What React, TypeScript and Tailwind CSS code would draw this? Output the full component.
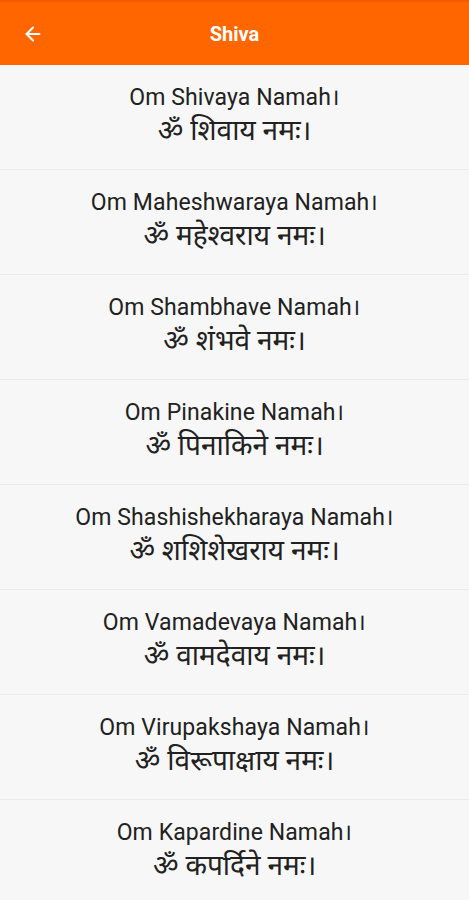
import React from 'react';
import { ArrowLeft } from 'lucide-react';

const mantras = [
  { en: 'Om Shivaya Namah।', hi: 'ॐ शिवाय नमः।' },
  { en: 'Om Maheshwaraya Namah।', hi: 'ॐ महेश्वराय नमः।' },
  { en: 'Om Shambhave Namah।', hi: 'ॐ शंभवे नमः।' },
  { en: 'Om Pinakine Namah।', hi: 'ॐ पिनाकिने नमः।' },
  { en: 'Om Shashishekharaya Namah।', hi: 'ॐ शशिशेखराय नमः।' },
  { en: 'Om Vamadevaya Namah।', hi: 'ॐ वामदेवाय नमः।' },
  { en: 'Om Virupakshaya Namah।', hi: 'ॐ विरूपाक्षाय नमः।' },
  { en: 'Om Kapardine Namah।', hi: 'ॐ कपर्दिने नमः।' },
];

const App: React.FC = () => {
  return (
    <div className="w-[469px] h-[900px] overflow-hidden bg-[#f7f7f7] font-['Roboto','Noto_Sans',sans-serif]">
      {/* Toolbar */}
      <div className="h-[65px] bg-[#ff6600] border-t-2 border-[#f45a00] flex items-center relative">
        <button className="absolute left-[22px] text-white">
          <ArrowLeft size={22} strokeWidth={2.2} />
        </button>
        <h1 className="w-full text-center text-white text-[20px] font-bold">Shiva</h1>
      </div>

      {/* List */}
      <div>
        {mantras.map((m) => (
          <div
            key={m.en}
            className="h-[105px] border-b border-[#ececec] flex flex-col items-center pt-[17px] text-[#212121]"
          >
            <p className="text-[23px] leading-[31px] tracking-[0.1px]">{m.en}</p>
            <p className="text-[28px] leading-[36px]">{m.hi}</p>
          </div>
        ))}
      </div>
    </div>
  );
};

export default App;
